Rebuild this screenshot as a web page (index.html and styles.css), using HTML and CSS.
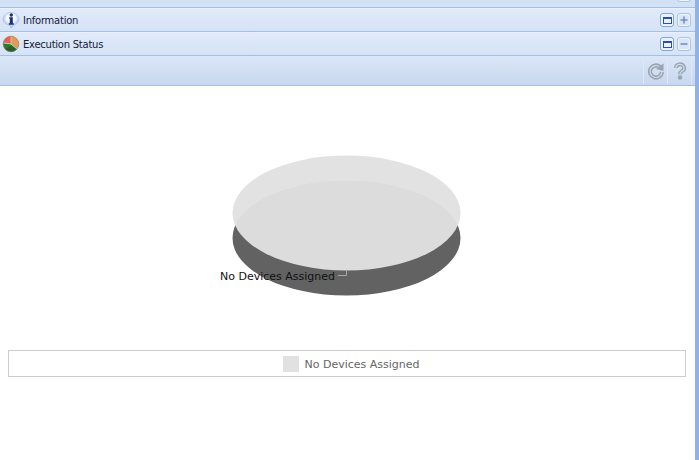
FILE: index.html
```html
<!DOCTYPE html>
<html lang="en">
<head>
    <meta charset="UTF-8">
    <meta name="viewport" content="width=device-width, initial-scale=1.0">
    <title>Execution Status</title>
    <link rel="stylesheet" href="styles.css">
</head>
<body>
    <div class="page">
        <div class="top-strip">
            <span class="btn btn-cut"></span>
        </div>
        <div class="panel-row">
            <svg class="row-icon" width="18" height="18" viewBox="0 0 18 18">
                <defs>
                    <radialGradient id="glass" cx=".5" cy=".35" r=".65">
                        <stop offset=".35" stop-color="#fbfdff"/>
                        <stop offset="1" stop-color="#8fb0e2"/>
                    </radialGradient>
                </defs>
                <path d="M9 1.500c4.400 0 8 2.900 8 6.600 0 3-2.300 5.300-5.400 6.100L9 17.200l-1-3C3.800 13.800 1 11.300 1 8.100 1 4.400 4.600 1.500 9 1.500z" fill="url(#glass)" stroke="#a9c0e4" stroke-width=".8"/>
                <path d="M7.200 6.300h3.600v5.900h1v1.500H6.800v-1.500h1V7.800h-.6z" fill="#1b2f7e"/>
                <circle cx="9.300" cy="4" r="1.700" fill="#1b2f7e"/>
            </svg>
            <span class="row-title">Information</span>
            <span class="btn btn-max"><i></i></span>
            <span class="btn btn-sign">
                <svg width="8" height="8" viewBox="0 0 8 8"><path d="M.5 4h7M4 .5v7" stroke="#6d92c6" stroke-width="1.600"/></svg>
            </span>
        </div>
        <div class="panel-row">
            <svg class="row-icon" width="18" height="18" viewBox="0 0 18 18">
                <circle cx="9" cy="9" r="7.800" fill="#e59a5a"/>
                <path d="M9 9L1.300 8A7.800 7.800 0 0 1 9 1.200z" fill="#ea5f58"/>
                <path d="M9 9L1.300 8A7.800 7.800 0 0 0 15 14z" fill="#2c7a33"/>
                <path d="M3 14.200A7.800 7.800 0 0 0 15 14L9 11z" fill="#24602a"/>
                <path d="M9 1.500V9l6 5M9 9L1.500 8" fill="none" stroke="#d8c79b"/>
                <circle cx="9" cy="9" r="7.800" fill="none" stroke="#8d8460" stroke-width=".7"/>
            </svg>
            <span class="row-title">Execution Status</span>
            <span class="btn btn-max"><i></i></span>
            <span class="btn btn-sign">
                <svg width="8" height="8" viewBox="0 0 8 8"><path d="M.5 4h7" stroke="#6d92c6" stroke-width="1.600"/></svg>
            </span>
        </div>
        <div class="toolbar">
            <span class="tool">
                <svg width="18" height="18" viewBox="0 0 18 18">
                    <path d="M13 5A6 6 0 1 0 15 10" fill="none" stroke="#98a3b3" stroke-width="4.200"/>
                    <path d="M13 5A6 6 0 1 0 15 10" fill="none" stroke="#d3dcea" stroke-width="1.200"/>
                    <path d="M9 7L16.500 1.500V9z" fill="#98a3b3"/>
                </svg>
            </span>
            <span class="tool">
                <svg width="16" height="18" viewBox="0 0 16 18">
                    <path d="M4 6a4 3.600 0 1 1 6 3.100C8.600 10 8 10.700 8 12.200" fill="none" stroke="#98a3b3" stroke-width="4"/>
                    <path d="M4 6a4 3.600 0 1 1 6 3.100C8.600 10 8 10.700 8 12.200" fill="none" stroke="#d3dcea" stroke-width="1.200"/>
                    <circle cx="8" cy="15.500" r="2.200" fill="#98a3b3"/>
                </svg>
            </span>
        </div>
        <div class="content">
            <svg class="chart" width="678" height="264" viewBox="0 0 678 264">
                <ellipse cx="338.500" cy="152" rx="114" ry="57.500" fill="#626262"/>
                <ellipse cx="338.500" cy="127" rx="114" ry="57.500" fill="#e1e1e1" fill-opacity=".96"/>
                <path d="M330 189.500h8.500v-5" fill="none" stroke="#a8a8a8"/>
                <text class="chart-label" x="212" y="194">No Devices Assigned</text>
            </svg>
            <div class="legend">
                <span class="swatch"></span>
                <span class="legend-text">No Devices Assigned</span>
            </div>
        </div>
    </div>
</body>
</html>
```
FILE: styles.css
```css
body {
    margin: 0;
    font-family: "DejaVu Sans", sans-serif;
    background: #fff;
}
.page {
    height: 460px;
    border-right: 4px solid #8fb2e8;
    overflow: hidden;
}
.top-strip {
    height: 7px;
    background: #d3e1f5;
    border-bottom: 1px solid #a3bfe4;
    display: flex;
    justify-content: flex-end;
    padding-right: 4px;
    overflow: hidden;
}
.btn-cut {
    margin-top: -12px;
}
.panel-row {
    height: 22px;
    background: linear-gradient(#e0eafa, #d6e3f6);
    border-top: 1px solid #eaf1fb;
    border-bottom: 1px solid #a3bfe4;
    display: flex;
    align-items: center;
    padding-right: 4px;
}
.row-icon {
    margin: 0 2px 0 2px;
    flex: none;
}
.row-title {
    flex: 1;
    margin-left: 1px;
    font-size: 10px;
    letter-spacing: -0.25px;
    color: #15203a;
}
.btn {
    width: 14px;
    height: 14px;
    box-sizing: border-box;
    border: 1px solid #a9c3e6;
    box-shadow: inset 0 0 0 1px #f1f6fd;
    border-radius: 3px;
    background: #d9e5f7;
    margin-left: 3px;
    display: flex;
    align-items: center;
    justify-content: center;
}
.btn-max {
    border: 1px solid #7fa4dc;
    background: #e6effb;
}
.btn-max i {
    display: block;
    width: 9px;
    height: 7px;
    box-sizing: border-box;
    border: 1px solid #2b50a8;
    border-top-width: 2px;
    background: #eaf1fb;
}
.toolbar {
    height: 29px;
    background: linear-gradient(#dbe6f7, #c8d7ee);
    border-bottom: 1px solid #a3bfe4;
    display: flex;
    justify-content: flex-end;
    align-items: center;
    padding-right: 3px;
}
.tool {
    width: 23px;
    height: 26px;
    display: flex;
    align-items: center;
    justify-content: center;
    border-left: 1px solid #dfe8f6;
}
.tool:last-child {
    border-right: 1px solid #dfe8f6;
}
.content {
    padding: 0 9px 0 8px;
}
.chart {
    display: block;
}
.chart-label {
    font-size: 11px;
    fill: #111;
}
.legend {
    height: 25px;
    border: 1px solid #ccc;
    display: flex;
    align-items: center;
    justify-content: center;
    gap: 5px;
    padding-left: 9px;
}
.swatch {
    width: 16px;
    height: 16px;
    background: #e1e1e1;
}
.legend-text {
    font-size: 11px;
    padding-top: 2px;
    color: #666;
}
```
